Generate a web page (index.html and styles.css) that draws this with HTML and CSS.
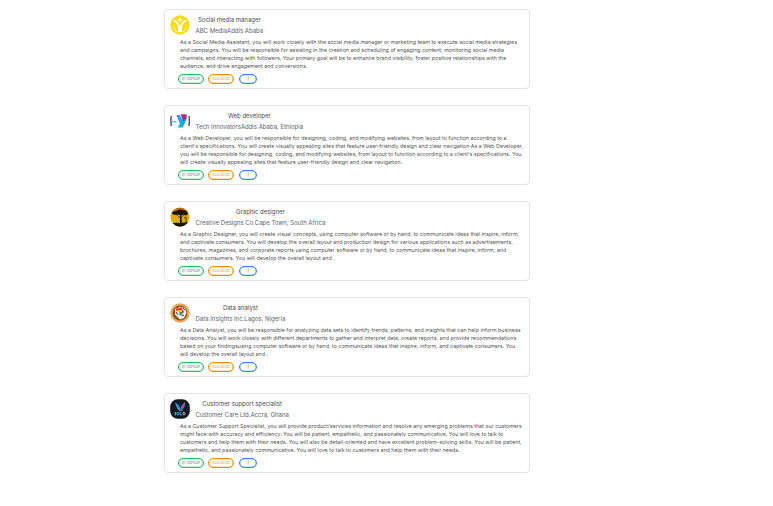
FILE: index.html
```html
<!DOCTYPE html>
<html lang="en">
<head>
<meta charset="utf-8">
<title>Job listings</title>
<link rel="stylesheet" href="styles.css">
</head>
<body>
<main class="list">
  <article class="card">
    <svg class="logo" viewBox="0 0 20 20"><circle cx="10" cy="10" r="9.7" fill="#f5dc20"/><circle cx="10" cy="5" r="1.7" fill="#fff"/><path d="M4 5.5Q8.7 8 9 12v5M16 5.5Q11.3 8 11 12v5" fill="none" stroke="#fff" stroke-width="1.5"/><path d="m8.6 10 1.4 1 1.4-1v7H8.6z" fill="#fff"/><path d="M3.5 12q1 4 4 5M16.5 12q-1 4-4 5" fill="none" stroke="#fffad0" stroke-width=".8"/></svg>
    <div class="body">
      <div class="head"><h2>Social media manager</h2><p class="company">ABC MediaAddis Ababa</p></div>
      <p class="desc">As a Social Media Assistant, you will work closely with the social media manager or marketing team to execute social media strategies<br>and campaigns. You will be responsible for assisting in the creation and scheduling of engaging content, monitoring social media<br>channels, and interacting with followers. Your primary goal will be to enhance brand visibility, foster positive relationships with the<br>audience, and drive engagement and conversions.</p>
      <div class="tags"><span class="tag green">In-person</span><span class="tag orange">Education</span><span class="tag blue">IT</span></div>
    </div>
  </article>
  <article class="card">
    <svg class="logo" viewBox="0 0 20 20"><path d="M1.3 5Q.5 10 1.3 15M18.9 5Q19.7 10 18.9 15" fill="none" stroke="#222" stroke-width="1.1"/><path d="M5 1Q10-.7 15 1M5 19Q10 20.7 15 19" fill="none" stroke="#eee" stroke-width=".7"/><path d="M6.3 4h3.5l2.4 4.8L16.5 5v3.5L12.8 16.5H7.9L9.8 12.2z" fill="#13aee5"/><path d="M10.6 3.2h6v4L13 10.2z" fill="#aa2c91"/><path d="M2 10.7h4.5" stroke="#54c9ee" stroke-width="1.6"/></svg>
    <div class="body">
      <div class="head"><h2>Web developer</h2><p class="company">Tech InnovatorsAddis Ababa, Ethiopia</p></div>
      <p class="desc">As a Web Developer, you will be responsible for designing, coding, and modifying websites, from layout to function according to a<br>client's specifications. You will create visually appealing sites that feature user-friendly design and clear navigation As a Web Developer,<br>you will be responsible for designing, coding, and modifying websites, from layout to function according to a client's specifications. You<br>will create visually appealing sites that feature user-friendly design and clear navigation.</p>
      <div class="tags"><span class="tag green">In-person</span><span class="tag orange">Education</span><span class="tag blue">IT</span></div>
    </div>
  </article>
  <article class="card">
    <svg class="logo" viewBox="0 0 20 20"><defs><linearGradient id="sunset" x2="0" y2="1"><stop stop-color="#b9500c"/><stop offset=".4" stop-color="#e9a80f"/><stop offset=".8" stop-color="#c9b414"/><stop offset="1" stop-color="#161306"/></linearGradient><clipPath id="disc"><circle cx="10" cy="10" r="9.6"/></clipPath></defs><g clip-path="url(#disc)"><path d="M0 0h20v20H0z" fill="url(#sunset)"/><path d="M2 7q0-3 4-3 3-2 6-1 5 0 6 4l-2 1.5-3-1-2 1-3-1-2 .5zM10 8l1.3 0 .6 8H10zM0 17q5-2 10-1l10-1v6H0z" fill="#1d1305"/><path d="m6 7 4 4 5-4M14 11l2-1v6" fill="none" stroke="#1d1305" stroke-width=".7"/></g></svg>
    <div class="body">
      <div class="head"><h2>Graphic designer</h2><p class="company">Creative Designs Co.Cape Town, South Africa</p></div>
      <p class="desc">As a Graphic Designer, you will create visual concepts, using computer software or by hand, to communicate ideas that inspire, inform,<br>and captivate consumers. You will develop the overall layout and production design for various applications such as advertisements,<br>brochures, magazines, and corporate reports using computer software or by hand, to communicate ideas that inspire, inform, and<br>captivate consumers. You will develop the overall layout and .</p>
      <div class="tags"><span class="tag green">In-person</span><span class="tag orange">Education</span><span class="tag blue">IT</span></div>
    </div>
  </article>
  <article class="card">
    <svg class="logo" viewBox="0 0 20 20"><circle cx="10" cy="10" r="9.7" fill="#efa856"/><circle cx="10" cy="10" r="7.4" fill="#85502a"/><path d="m5 6 5-2 5 1 1.5 5-2.5 5-4 1.5-2-2-3-3z" fill="#f8f2ea"/><path d="M6 5.8 12 4.5v2.3L6 8z" fill="#e52d23"/><path d="m7 7.5 5-.7v2l-4 .5z" fill="#f2d32c"/><path d="M9.5 9h2.5l-.5 4-2-1z" fill="#249444"/><path d="m12 6 2 2-1 3-1-1z" fill="#e33a25"/><path d="m13 5 2 2M6 9l2 3M12 13l2-1" stroke="#251711" stroke-width=".9"/></svg>
    <div class="body">
      <div class="head"><h2>Data analyst</h2><p class="company">Data Insights Inc.Lagos, Nigeria</p></div>
      <p class="desc">As a Data Analyst, you will be responsible for analyzing data sets to identify trends, patterns, and insights that can help inform business<br>decisions. You will work closely with different departments to gather and interpret data, create reports, and provide recommendations<br>based on your findingsusing computer software or by hand, to communicate ideas that inspire, inform, and captivate consumers. You<br>will develop the overall layout and .</p>
      <div class="tags"><span class="tag green">In-person</span><span class="tag orange">Education</span><span class="tag blue">IT</span></div>
    </div>
  </article>
  <article class="card">
    <svg class="logo" viewBox="0 0 20 20"><rect x=".2" y=".2" width="19.6" height="19.6" rx="7.5" fill="#15181f"/><path d="M5 3.5q5 2 5.5 8-4-1-5.5-8z" fill="#3d8fd0"/><path d="M15 3q1 6-4.5 8.5Q10 7 15 3z" fill="#7765ad"/><path d="m7.5 9.5 3 2.3 2-1" fill="none" stroke="#42cee5" stroke-width=".9"/><path d="M5.3 13v3.3" stroke="#58c8f0"/><circle cx="7.9" cy="14.6" r="1.2" fill="none" stroke="#38bcef" stroke-width=".9"/><path d="M10.3 13v3h1.4" fill="none" stroke="#7789eb" stroke-width=".9"/><circle cx="13.9" cy="14.6" r="1.2" fill="none" stroke="#c8c8f8" stroke-width=".9"/></svg>
    <div class="body">
      <div class="head"><h2>Customer support specialist</h2><p class="company">Customer Care Ltd.Accra, Ghana</p></div>
      <p class="desc">As a Customer Support Specialist, you will provide product/services information and resolve any emerging problems that our customers<br>might face with accuracy and efficiency. You will be patient, empathetic, and passionately communicative. You will love to talk to<br>customers and help them with their needs. You will also be detail-oriented and have excellent problem-solving skills. You will be patient,<br>empathetic, and passionately communicative. You will love to talk to customers and help them with their needs.</p>
      <div class="tags"><span class="tag green">In-person</span><span class="tag orange">Education</span><span class="tag blue">IT</span></div>
    </div>
  </article>
</main>
</body>
</html>
```
FILE: styles.css
```css
* { box-sizing: border-box; margin: 0; padding: 0; }
body { background: #fff; font-family: Inter, sans-serif; color: #5f6368; }
.list { display: flex; flex-direction: column; gap: 16px; width: 366px; margin: 9px 0 0 164px; }
.card { display: flex; height: 80px; padding: 5px; border: 1px solid #e2e4e8; border-radius: 4px; }
.logo { flex: none; width: 20px; height: 20px; }
.body { white-space: nowrap; }
.head { width: max-content; margin-left: 5.5px; text-align: center; }
h2 { font-size: 6px; font-weight: 400; line-height: 10px; color: #4b4b4b; }
.company { font-size: 6px; line-height: 12px; color: #5d636d; }
.desc { margin: 1px 0 0 -10px; font-size: 5.333px; line-height: 8px; color: #555; }
.tags { display: flex; margin: 4px 0 0 -12px; }
.tag { height: 10px; border: 1px solid; border-radius: 5px; font-size: 4px; line-height: 8px; text-align: center; box-shadow: 0 0 0 .25px currentColor; }
.green { width: 26px; border-color: #22c55e; color: #7c7c8c; box-shadow: inset 0 0 0 .3px #22c55e; }
.orange { width: 26px; margin-left: 4px; border-color: #ff8a16; color: #f79a82; box-shadow: inset 0 0 0 .3px #ff8a16; }
.blue { width: 18px; margin-left: 5px; border-color: #3b82f6; color: #9a8ce0; box-shadow: inset 0 0 0 .3px #3b82f6; }
```
